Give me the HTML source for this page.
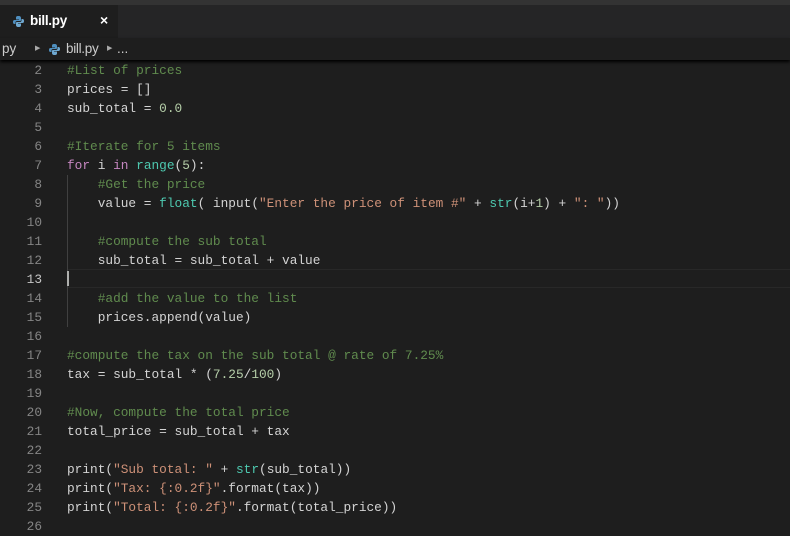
<!DOCTYPE html>
<html><head><meta charset="utf-8"><style>
body{margin:0;width:790px;height:535px;background:#1e1e1e;overflow:hidden;font-family:"Liberation Sans",sans-serif;position:relative}
.top{position:absolute;left:0;top:0;width:790px;height:5px;background:#333}
.tabs{position:absolute;left:0;top:5px;width:790px;height:33px;background:#252526}
.tab{position:absolute;left:0;top:0;width:118px;height:33px;background:#1e1e1e;color:#fff;font-size:13.5px}
.crumb{position:absolute;left:0;top:38px;width:790px;height:22px;background:#1e1e1e;color:#ccc;font-size:13.5px;box-shadow:0 2px 3px #000}
.ln{position:absolute;left:0;width:42px;text-align:right;color:#858585;font:12.8px/19px "Liberation Mono",monospace}
.code{position:absolute;left:67px;top:61px;font:12.8px/19px "Liberation Mono",monospace;color:#d4d4d4;white-space:pre}
.c{color:#608b4e}.k{color:#c586c0}.f{color:#4ec9b0}.n{color:#b5cea8}.s{color:#ce9178}
.cur{position:absolute;left:67px;top:269px;width:723px;height:17px;border:1px solid #282828}
</style></head><body>
<div class="top"></div>
<div class="tabs"><div class="tab">
<svg style="position:absolute;left:13px;top:11px" width="11" height="11" viewBox="0 0 11 11"><path d="M5.5 0C3 0 3 1 3 2v1.5h3V4H1.5C0 4 0 5.5 0 6s0 2 1.5 2H2.5V6.5C2.5 5.5 3.2 5 4 5h3c.8 0 1-.5 1-1V2C8 1 7.5 0 5.5 0z" fill="#4f8fbf"/><path d="M5.5 11c2.5 0 2.5-1 2.5-2V7.5H5V7h4.5C11 7 11 5.5 11 5s0-2-1.5-2H8.5v1.5C8.5 5.5 7.8 6 7 6H4c-.8 0-1 .5-1 1v2c0 1 .5 2 2.5 2z" fill="#6fa8d0"/></svg>
<span style="position:absolute;left:30px;top:8px;font-weight:bold;letter-spacing:-0.3px">bill.py</span>
<span style="position:absolute;left:100px;top:7px;font-weight:bold;font-size:14px">×</span></div></div>
<div class="crumb"><span style="position:absolute;left:2px;top:3px">py</span><span style="position:absolute;left:35px;top:6px;font-size:7px;color:#aaa">▶</span>
<svg style="position:absolute;left:49px;top:6px" width="11" height="11" viewBox="0 0 11 11"><path d="M5.5 0C3 0 3 1 3 2v1.5h3V4H1.5C0 4 0 5.5 0 6s0 2 1.5 2H2.5V6.5C2.5 5.5 3.2 5 4 5h3c.8 0 1-.5 1-1V2C8 1 7.5 0 5.5 0z" fill="#4f8fbf"/><path d="M5.5 11c2.5 0 2.5-1 2.5-2V7.5H5V7h4.5C11 7 11 5.5 11 5s0-2-1.5-2H8.5v1.5C8.5 5.5 7.8 6 7 6H4c-.8 0-1 .5-1 1v2c0 1 .5 2 2.5 2z" fill="#6fa8d0"/></svg>
<span style="position:absolute;left:66px;top:3px;letter-spacing:-0.3px">bill.py</span><span style="position:absolute;left:107px;top:6px;font-size:7px;color:#aaa">▶</span><span style="position:absolute;left:117px;top:3px">...</span></div>
<div class="cur"></div>
<div style="position:absolute;left:67px;top:175px;width:1px;height:152px;background:#404040"></div>
<div style="position:absolute;left:67px;top:271px;width:2px;height:15px;background:#aeafad"></div>
<div class="ln" style="top:61px">2<br>3<br>4<br>5<br>6<br>7<br>8<br>9<br>10<br>11<br>12<br><span style="color:#c6c6c6">13</span><br>14<br>15<br>16<br>17<br>18<br>19<br>20<br>21<br>22<br>23<br>24<br>25<br>26</div>
<div class="code"><span class="c">#List of prices</span>
prices = []
sub_total = <span class="n">0.0</span>

<span class="c">#Iterate for 5 items</span>
<span class="k">for</span> i <span class="k">in</span> <span class="f">range</span>(<span class="n">5</span>):
    <span class="c">#Get the price</span>
    value = <span class="f">float</span>( input(<span class="s">"Enter the price of item #"</span> + <span class="f">str</span>(i+<span class="n">1</span>) + <span class="s">": "</span>))

    <span class="c">#compute the sub total</span>
    sub_total = sub_total + value

    <span class="c">#add the value to the list</span>
    prices.append(value)

<span class="c">#compute the tax on the sub total @ rate of 7.25%</span>
tax = sub_total * (<span class="n">7.25</span>/<span class="n">100</span>)

<span class="c">#Now, compute the total price</span>
total_price = sub_total + tax

print(<span class="s">"Sub total: "</span> + <span class="f">str</span>(sub_total))
print(<span class="s">"Tax: {:0.2f}"</span>.format(tax))
print(<span class="s">"Total: {:0.2f}"</span>.format(total_price))
</div>
</body></html>
